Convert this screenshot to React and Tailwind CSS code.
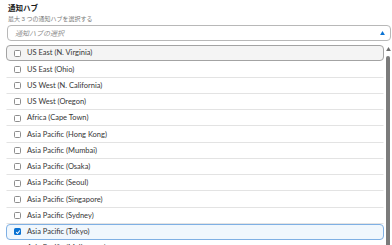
import React from "react";

const regions = [
  "US East (N. Virginia)",
  "US East (Ohio)",
  "US West (N. California)",
  "US West (Oregon)",
  "Africa (Cape Town)",
  "Asia Pacific (Hong Kong)",
  "Asia Pacific (Mumbai)",
  "Asia Pacific (Osaka)",
  "Asia Pacific (Seoul)",
  "Asia Pacific (Singapore)",
  "Asia Pacific (Sydney)",
  "Asia Pacific (Tokyo)",
  "Asia Pacific (Melbourne)",
];

const Checkbox = ({ checked }) =>
  checked ? (
    <span className="flex w-[7px] h-[7px] items-center justify-center rounded-[1.5px] bg-[#0972d3]">
      <svg viewBox="0 0 8 8" className="w-[6px] h-[6px]">
        <path d="M1.5 4.2 L3.3 6 L6.5 2" fill="none" stroke="white" strokeWidth="1.4" />
      </svg>
    </span>
  ) : (
    <span className="block w-[7px] h-[7px] rounded-[1.5px] border border-[#8d8d8d] bg-white" />
  );

const Row = ({ label, index }) => {
  const focused = index === 0;
  const selected = label === "Asia Pacific (Tokyo)";
  let box = "border-b border-b-[#e3e3e3] border-x border-x-transparent border-t border-t-transparent";
  if (focused) box = "border border-[#a3a3a3] rounded-[4px] bg-[#f4f4f4]";
  if (selected) box = "border border-[#7fb0e4] rounded-[4px] bg-[#f0f7fd]";
  return (
    <div className={`flex items-center h-[16.25px] pl-[7px] gap-[6px] ${box}`}>
      <Checkbox checked={selected} />
      <span className="text-[7.5px] leading-none text-[#363636]">{label}</span>
    </div>
  );
};

export default function App() {
  return (
    <div
      className="w-[392px] h-[245px] overflow-hidden bg-white"
      style={{ fontFamily: 'Lato, "Noto Sans CJK JP", sans-serif' }}
    >
      <div className="pl-[8px] pt-[4px]">
        <div className="text-[7.5px] leading-[9px] font-bold text-[#1a1a1a]">通知ハブ</div>
        <div className="mt-[2px] text-[6px] leading-[7px] text-[#7a7a7a]">
          最大 3 つの通知ハブを選択する
        </div>
      </div>
      <div className="ml-[7px] mr-[1px] mt-[3px] h-[16px] flex items-center justify-between rounded-[4px] border border-[#b8b8b8] pl-[7px] pr-[5px]">
        <span className="text-[7px] italic text-[#8a8a8a]">通知ハブの選択</span>
        <svg viewBox="0 0 6 5" className="w-[5px] h-[4px]">
          <path d="M0 5 L3 0 L6 5 Z" fill="#0972d3" />
        </svg>
      </div>
      <div className="flex mt-[4px]">
        <div className="ml-[6px] w-[378px] flex flex-col">
          {regions.map((r, i) => (
            <Row key={r} label={r} index={i} />
          ))}
        </div>
        <div className="flex-1 flex flex-col items-center pt-[2px]">
          <svg viewBox="0 0 6 5" className="w-[5px] h-[4px]">
            <path d="M0 5 L3 0 L6 5 Z" fill="#6e6e6e" />
          </svg>
          <div className="mt-[5px] w-[4px] h-[200px] rounded-full bg-[#7b7b7b]" />
        </div>
      </div>
    </div>
  );
}
